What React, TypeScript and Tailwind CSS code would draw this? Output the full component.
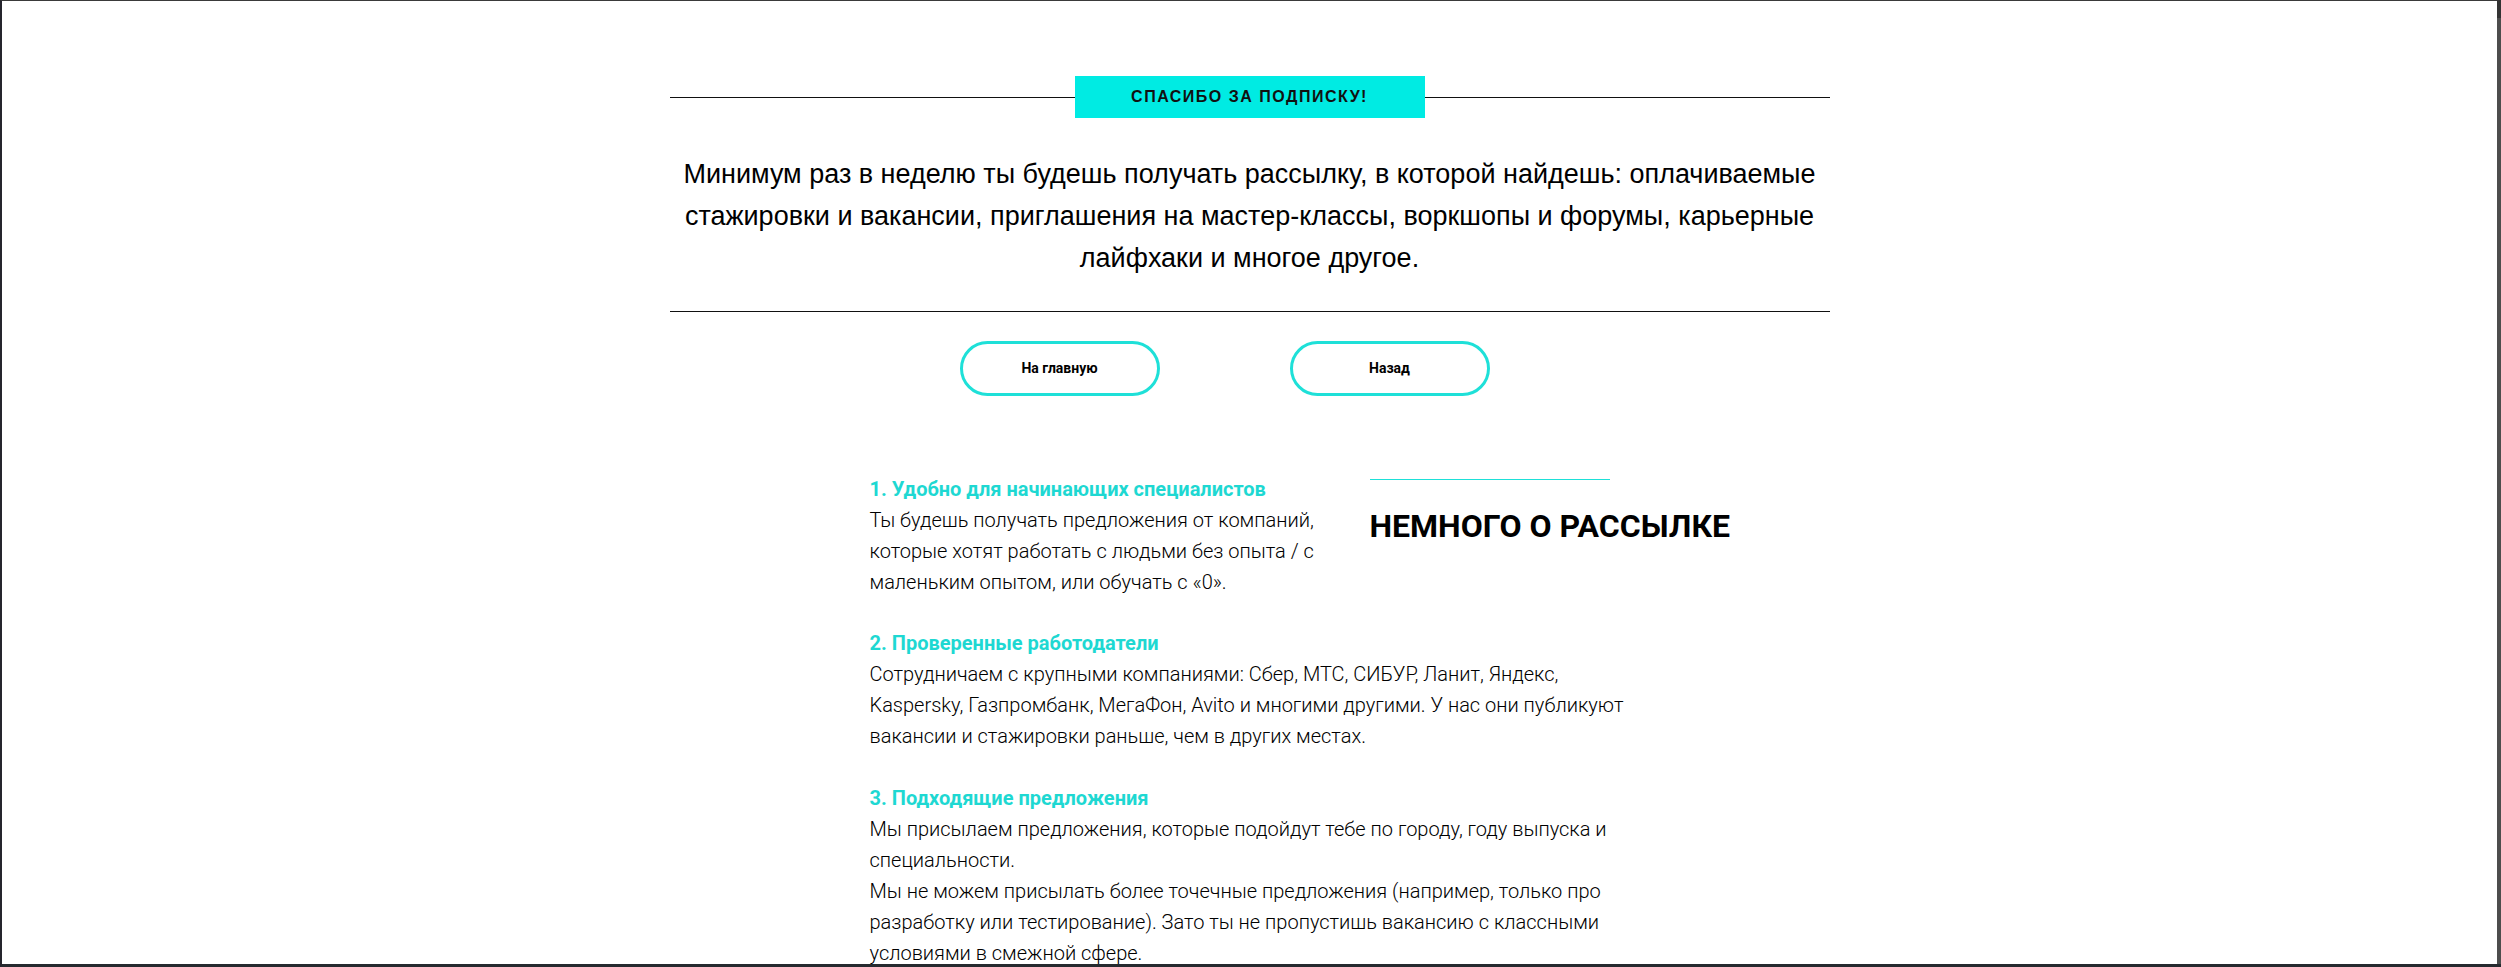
import React from "react";

const CYAN_TEXT = "text-[#1ed8d2]";

export default function App() {
  return (
    <div className="flex h-[967px] w-full overflow-hidden bg-white">
      <div className="h-full flex-1 overflow-hidden border-l-2 border-t border-b-[3px] border-l-[#25252d] border-t-[#3a3a3a] border-b-[#262a2f]">
        <div className="mx-auto w-[1200px] px-5 font-['Roboto',sans-serif]">
          {/* Badge row */}
          <div className="mt-[75px] flex items-center">
            <div className="h-px flex-1 bg-[#111]" />
            <div className="flex h-[42px] w-[350px] items-center justify-center bg-[#00ebe3]">
              <span className="font-['Liberation_Sans',Arial,sans-serif] text-[16px] font-bold uppercase tracking-[1.5px] text-[#111]">
                Спасибо за подписку!
              </span>
            </div>
            <div className="h-px flex-1 bg-[#111]" />
          </div>

          {/* Paragraph */}
          <p className="mt-[35px] text-center font-['Liberation_Sans',Arial,sans-serif] text-[27px] leading-[42px] text-black">
            Минимум раз в неделю ты будешь получать рассылку, в которой найдешь: оплачиваемые стажировки и вакансии, приглашения на мастер-классы, воркшопы и форумы, карьерные лайфхаки и многое другое.
          </p>

          <div className="mt-[32px] h-px bg-[#111]" />

          {/* Buttons */}
          <div className="mt-[29px] flex">
            <div className="ml-[290px] flex h-[55px] w-[200px] items-center justify-center rounded-full border-[3px] border-[#1ee0d8]">
              <span className="text-[14px] font-bold text-black">На главную</span>
            </div>
            <div className="ml-[130px] flex h-[55px] w-[200px] items-center justify-center rounded-full border-[3px] border-[#1ee0d8]">
              <span className="text-[14px] font-bold text-black">Назад</span>
            </div>
          </div>

          {/* Lower section */}
          <div className="mt-[78px] flex">
            <div className="ml-[200px] w-[460px] text-[20px] leading-[31px] text-black">
              <div className={`font-bold ${CYAN_TEXT}`}>1. Удобно для начинающих специалистов</div>
              <div className="font-light">
                Ты будешь получать предложения от компаний, которые хотят работать с людьми без опыта / с маленьким опытом, или обучать с «0».
              </div>
            </div>
            <div className="ml-[40px] w-[460px]">
              <div className="mt-[5px] h-px w-[240px] bg-[#1ee0d8]" />
              <h2 className="mt-[28px] text-[32px] font-bold uppercase leading-[37px] text-black">
                Немного о рассылке
              </h2>
            </div>
          </div>

          <div className="mt-[30px] ml-[200px] w-[760px] text-[20px] leading-[31px] text-black">
            <div className={`font-bold ${CYAN_TEXT}`}>2. Проверенные работодатели</div>
            <div className="font-light">
              Сотрудничаем с крупными компаниями: Сбер, МТС, СИБУР, Ланит, Яндекс, Kaspersky, Газпромбанк, МегаФон, Avito и многими другими. У нас они публикуют вакансии и стажировки раньше, чем в других местах.
            </div>
            <div className="h-[31px]" />
            <div className={`font-bold ${CYAN_TEXT}`}>3. Подходящие предложения</div>
            <div className="font-light">
              Мы присылаем предложения, которые подойдут тебе по городу, году выпуска и специальности.
            </div>
            <div className="font-light">
              Мы не можем присылать более точечные предложения (например, только про разработку или тестирование). Зато ты не пропустишь вакансию с классными условиями в смежной сфере.
            </div>
          </div>
        </div>
      </div>
      <div className="flex h-full w-[4px] flex-col bg-[#4d4d4d]">
        <div className="h-[18px] bg-[#333]" />
        <div className="flex-1" />
        <div className="h-[3px] bg-[#262a2f]" />
      </div>
    </div>
  );
}
